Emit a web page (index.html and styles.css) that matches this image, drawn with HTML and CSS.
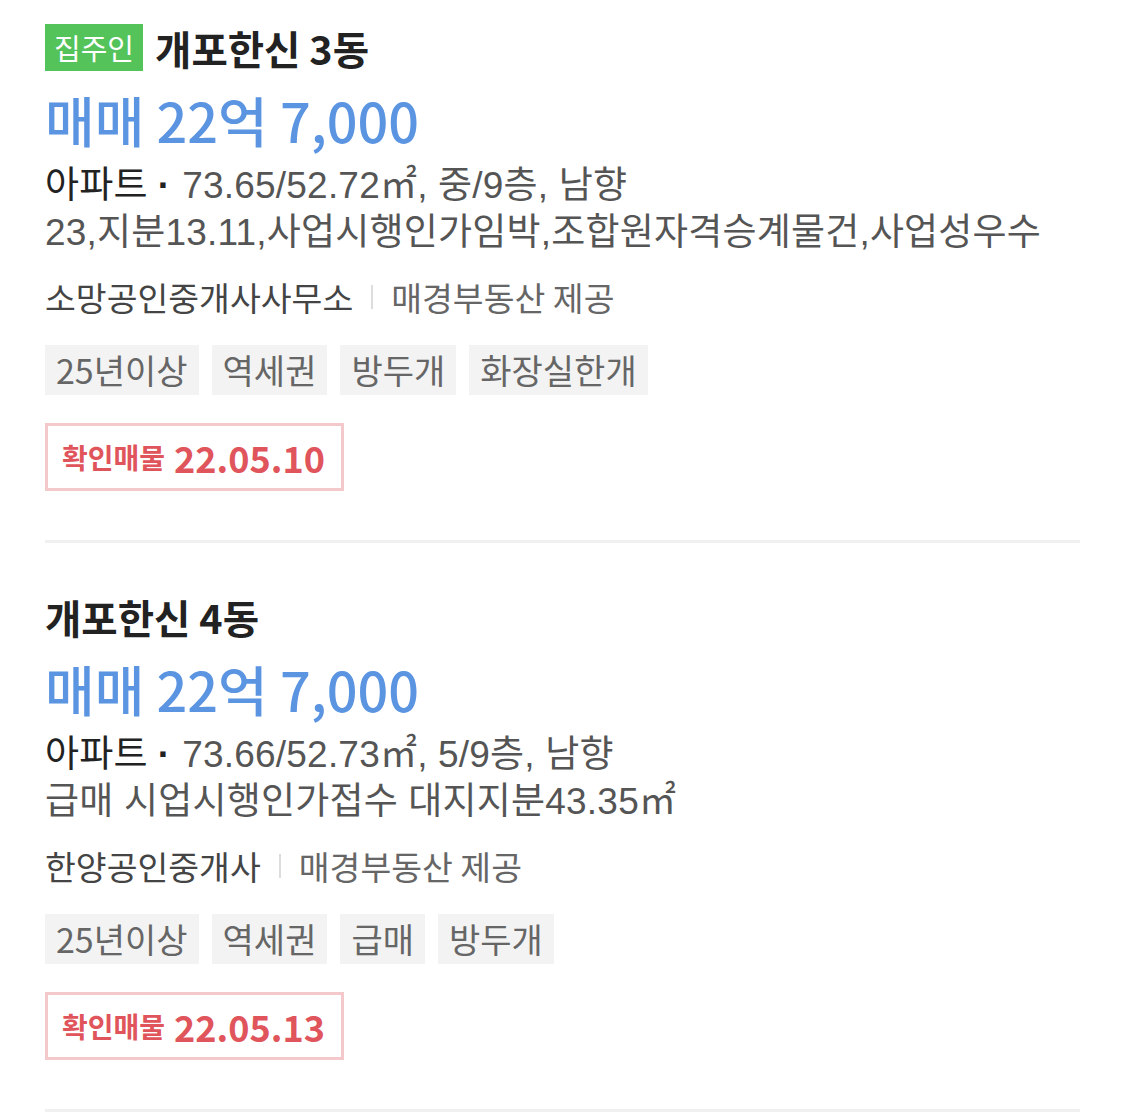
FILE: index.html
```
<!DOCTYPE html>
<html>
	<head>
		<meta charset="UTF-8">
		<title>매물 목록</title>
		<link rel="stylesheet" href="styles.css">
	</head>
	<body>
		<ul class="list">
			<li class="item">
				<div class="title">
					<span class="badge">집주인</span>
					<strong class="name">개포한신 3동</strong>
				</div>
				<div class="price">매매 22억 7,000</div>
				<div class="desc">
					<p><span class="type">아파트</span><span class="dot">·</span>73.65/52.72㎡, 중/9층, 남향</p>
					<p>23,지분13.11,사업시행인가임박,조합원자격승계물건,사업성우수</p>
				</div>
				<div class="broker">
					<span class="agent">소망공인중개사사무소</span><i class="sep"></i><span class="cp">매경부동산 제공</span>
				</div>
				<ul class="tags">
					<li>25년이상</li>
					<li>역세권</li>
					<li>방두개</li>
					<li>화장실한개</li>
				</ul>
				<div class="confirm"><span class="label">확인매물</span><span class="date">22.05.10</span></div>
			</li>
			<li class="item">
				<div class="title">
					<strong class="name">개포한신 4동</strong>
				</div>
				<div class="price">매매 22억 7,000</div>
				<div class="desc">
					<p><span class="type">아파트</span><span class="dot">·</span>73.66/52.73㎡, 5/9층, 남향</p>
					<p>급매 시업시행인가접수 대지지분43.35㎡</p>
				</div>
				<div class="broker">
					<span class="agent">한양공인중개사</span><i class="sep"></i><span class="cp">매경부동산 제공</span>
				</div>
				<ul class="tags">
					<li>25년이상</li>
					<li>역세권</li>
					<li>급매</li>
					<li>방두개</li>
				</ul>
				<div class="confirm"><span class="label">확인매물</span><span class="date">22.05.13</span></div>
			</li>
		</ul>
	</body>
</html>
```
FILE: styles.css
```
*{
	margin:0;
	padding:0;
}
body{
	background:#fff;
	font-family:"Noto Sans CJK KR", "Noto Sans", sans-serif;
	color:#222;
}
ul{
	list-style:none;
}
ul.list{
	padding:0 45px;
}
li.item{
	padding:50px 0 49px;
	border-bottom:3px solid #f0f0f0;
}
li.item:first-child{
	padding-top:24px;
}
.title{
	display:flex;
	align-items:center;
	height:47px;
}
.title .badge{
	background:#53c35a;
	color:#fff;
	font-size:29px;
	line-height:47px;
	padding:0 9px;
	margin-right:12px;
}
.title .name{
	font-size:39.5px;
	font-weight:bold;
	color:#222;
}
.price{
	margin-top:18px;
	font-size:54px;
	line-height:62px;
	color:#5b94e1;
	font-weight:500;
}
.desc{
	margin-top:11px;
	font-family:"Liberation Sans", "Noto Sans CJK KR", sans-serif;
	font-size:37px;
	line-height:47px;
	color:#555;
	letter-spacing:0.2px;
}
.desc .type{
	color:#222;
}
.desc .dot{
	color:#222;
	font-weight:bold;
	margin:0 12px 0 10px;
}
.broker{
	margin-top:19px;
	display:flex;
	align-items:center;
	font-size:33.5px;
	line-height:44px;
}
.broker .agent{
	color:#444;
}
.broker .sep{
	display:block;
	width:2px;
	height:24px;
	background:#ddd;
	margin:0 18px;
}
.broker .cp{
	color:#666;
}
ul.tags{
	margin-top:26px;
	display:flex;
	gap:13px;
}
ul.tags>li{
	background:#f3f3f3;
	color:#666;
	font-size:34px;
	line-height:50px;
	padding:0 11px;
}
.confirm{
	margin-top:28px;
	display:inline-flex;
	align-items:center;
	height:68px;
	box-sizing:border-box;
	border:3px solid #f3c9cc;
	padding:0 16px 0 14px;
	color:#e0545b;
	font-weight:bold;
}
.confirm .label{
	font-size:28px;
	margin-right:9px;
}
.confirm .date{
	font-size:36px;
}
```
